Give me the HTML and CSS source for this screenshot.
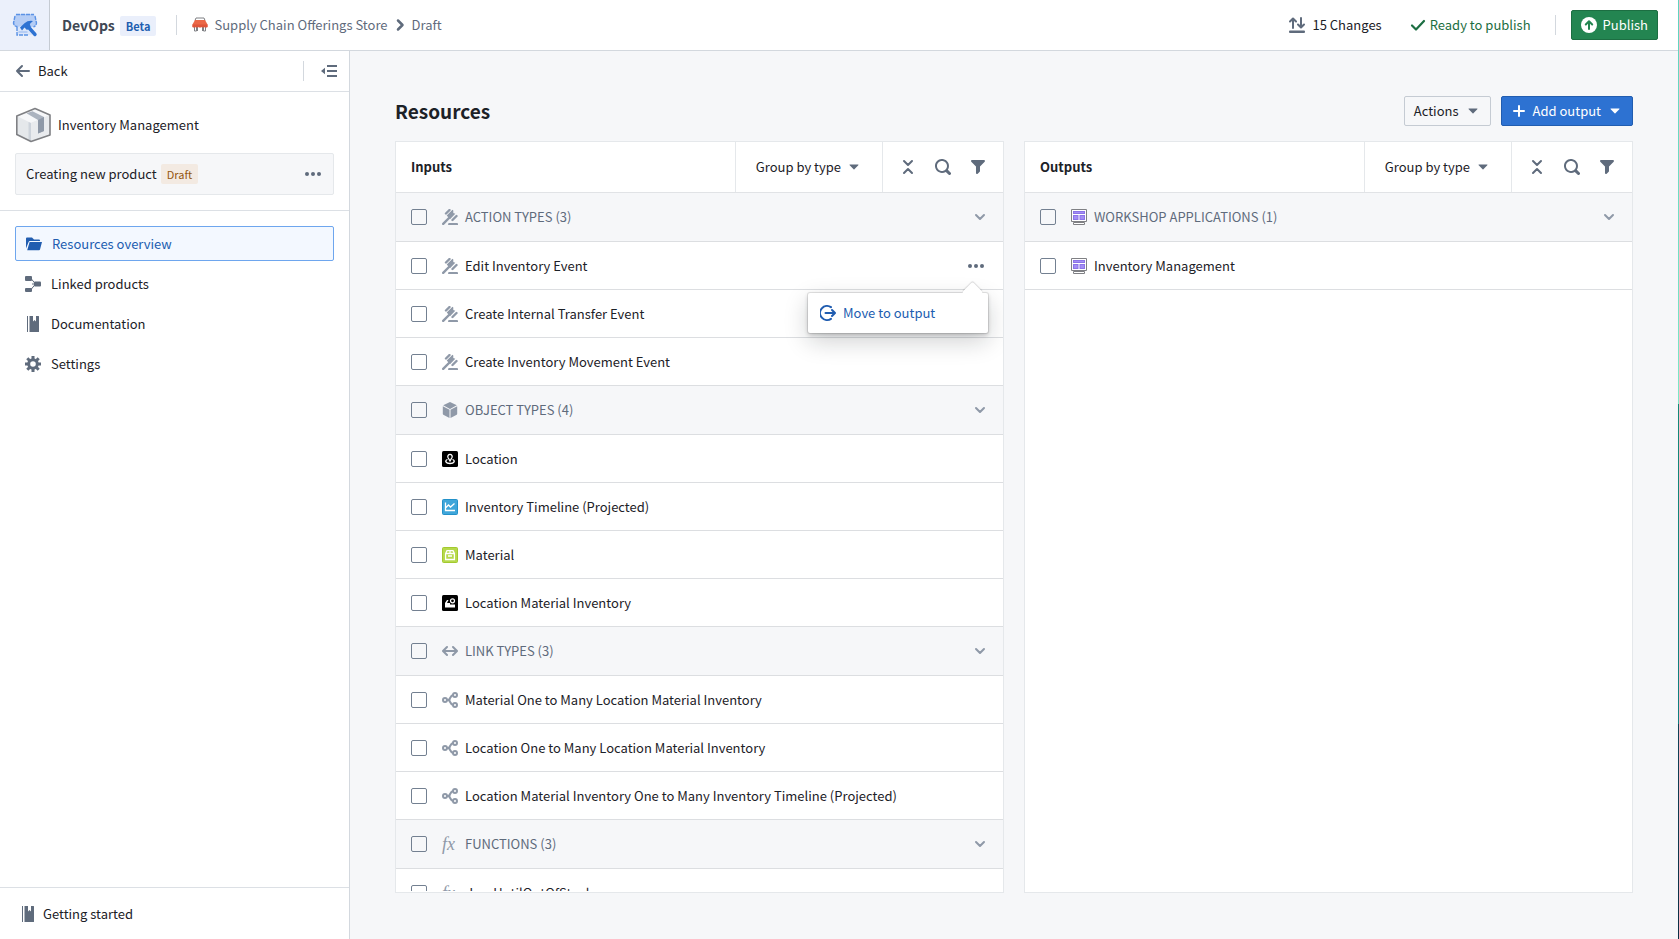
FILE: index.html
```html
<!DOCTYPE html>
<html lang="en">
<head>
  <meta charset="UTF-8">
  <meta name="viewport" content="width=device-width, initial-scale=1.0">
  <title>DevOps - Inventory Management</title>
  <link rel="stylesheet" href="styles.css">
</head>
<body>

  <!-- shared icons -->
  <svg class="sprite" aria-hidden="true">
    <symbol id="caret" viewBox="0 0 16 16"><path d="M4 5.5h8c.5 0 .6.5.3.8l-3.9 4a.5.5 0 0 1-.8 0l-3.900-4c-.3-.3-.2-.8.3-.8z"/></symbol>
    <symbol id="chevron-down" viewBox="0 0 16 16"><path d="M4 6l4 4 4-4" fill="none" stroke="currentColor" stroke-width="2" stroke-linecap="round" stroke-linejoin="round"/></symbol>
    <symbol id="collapse" viewBox="0 0 16 16"><path d="M4 2l4 4 4-4M4 14l4-4 4 4" fill="none" stroke="currentColor" stroke-width="2" stroke-linecap="round" stroke-linejoin="round"/></symbol>
    <symbol id="search" viewBox="0 0 16 16"><path d="M15.550 13.430l-2.670-2.680a6.940 6.940 0 0 0 1.110-3.760c0-3.870-3.130-7-7-7s-7 3.130-7 7 3.130 7 7 7c1.390 0 2.680-.420 3.760-1.110l2.680 2.670a1.498 1.498 0 1 0 2.120-2.120zm-8.560-1.440c-2.760 0-5-2.240-5-5s2.240-5 5-5 5 2.240 5 5-2.240 5-5 5z"/></symbol>
    <symbol id="filter" viewBox="0 0 16 16"><path d="M13.990.990h-12a1 1 0 0 0-.710 1.710l4.710 4.710v6.590a1.003 1.003 0 0 0 1.710.710l2-2c.180-.190.290-.440.290-.710V7.410l4.710-4.710a1.003 1.003 0 0 0-.710-1.710z"/></symbol>
    <symbol id="more" viewBox="0 0 16 16"><circle cx="2" cy="8" r="2"/><circle cx="8" cy="8" r="2"/><circle cx="14" cy="8" r="2"/></symbol>
    <symbol id="manual" viewBox="0 0 16 16"><path d="M2 0h1v16H2.500A.5.5 0 0 1 2 15.500zM4.500 0H8v5.500L9.500 4 11 5.500V0h1v5.500V0h1.500a.5.5 0 0 1 .5.500v15a.5.5 0 0 1-.5.500h-9z"/></symbol>
    <symbol id="action" viewBox="0 0 16 16"><path d="M1.200 14.800L7 9M4 4.500L7.500 1M10.500 11L14.500 7" fill="none" stroke="currentColor" stroke-width="2.400" stroke-linecap="round"/><path d="M4.700 6.500L10.500.7l.8.8v2.500l2 .8L8 10.200z"/><path d="M6.500 14h9l.5 1v1H6z"/></symbol>
    <symbol id="cube" viewBox="0 0 16 16"><path d="M8 0l6.800 3.300L8 7 1.200 3.300zM.8 4.200l6.700 3.600V16L1.300 12.700a1 1 0 0 1-.5-.9zM15.200 4.200L8.500 7.800V16l6.200-3.300a1 1 0 0 0 .5-.9z"/></symbol>
    <symbol id="link-types" viewBox="0 0 16 16"><path d="M1.500 8h13M5 4L1 8l4 4M11 4l4 4-4 4" fill="none" stroke="currentColor" stroke-width="2" stroke-linecap="round" stroke-linejoin="round"/></symbol>
    <symbol id="graph" viewBox="0 0 16 16"><g fill="none" stroke="currentColor" stroke-width="2"><circle cx="3" cy="8" r="2"/><circle cx="13" cy="3" r="2"/><circle cx="13" cy="13" r="2"/><path d="M5 8h1.500M11 3C8 3.500 8.500 8 6 8s5 0 0 0c2.500 0 2 4.500 5 5"/></g></symbol>
    <symbol id="workshop" viewBox="0 0 16 16"><path d="M2.500 13.500h11v2h-11z" fill="#fff" stroke="#7f8084"/><path d="M6 12h4v2H6z" fill="#7f8084"/><path d="M.5.5h15v12H.5z" fill="#fff" stroke="#7f8084"/><path d="M2 2h12v3H2zM2 6h5.500v5H2zM8.500 6H14v5H8.500z" fill="#8c74e8"/><path d="M3 3h10v1H3zM3 7h3.500v3H3zM9.500 7H13v3H9.500z" fill="#a38df5"/></symbol>
  </svg>

  <header class="topbar">
    <a class="logo" href="#" aria-label="Home">
      <svg width="26" height="26" viewBox="0 0 26 26"><path d="M5 13h15v10H5z" fill="#dbe6fa"/><path d="M4 2h18l3 9-1.500 3.500-4 .5-3.500-1-3.500 1-3-1-4 1-3-1L1 11z" fill="#b5cdf5"/><path d="M4 2.500h18M3 4L1.500 11q1 4 4 3.500M23 4l1.500 7q-.5 3-3 4" fill="none" stroke="#5b92e5" stroke-width="1.400" stroke-dasharray="4 1"/><path d="M5 15v8h12" fill="none" stroke="#5b92e5" stroke-width="1.400" stroke-dasharray="4 1"/><path d="M6.500 20h9" stroke="#8fb4ef"/><path d="M15 13.500l8 9" stroke="#2d72d2" stroke-width="3.400" stroke-linecap="round"/><path d="M8 15.500l4.500-4.300q3.500-3 8.500-2.200l-3.200 3 1 3-3.800 3-2.500-2.500-2.500 3z" fill="#2d72d2"/></svg>
    </a>
    <span class="app-name">DevOps</span>
    <span class="tag tag-beta">Beta</span>
    <span class="divider"></span>
    <nav class="crumbs" aria-label="Breadcrumb">
      <a href="#">
        <svg width="16" height="16" viewBox="0 0 16 16"><path d="M3 3.500l1-2.500h8l1 2.500" fill="#fff" stroke="#7f8084"/><path d="M2.500 10v4h2v-4M5.500 10v4M11.500 10v4h2v-4M10.500 10v4" fill="none" stroke="#7f8084"/><path d="M3 3h10l2.500 4.500v2.500H.5V7.500z" fill="#eb6847"/><path d="M.5 7.500h15V10q-1 1-2.500 0-1.500 1-3 0-2 1-4 0-1.500 1-3 0-1.500 1-2.500 0z" fill="#e0563a"/></svg>
        Supply Chain Offerings Store
      </a>
      <svg class="icon" width="16" height="16" viewBox="0 0 16 16"><path d="M6 3.500L10.500 8 6 12.500" fill="none" stroke="currentColor" stroke-width="2.500" stroke-linecap="round" stroke-linejoin="round"/></svg>
      <span>Draft</span>
    </nav>

    <div class="topbar-right">
      <button class="plain" type="button">
        <svg class="icon" width="16" height="16" viewBox="0 0 16 16"><path d="M4 11V2M1 4.500L4 1.500l3 3M12 1v9M9 7.500l3 3 3-3" fill="none" stroke="currentColor" stroke-width="2" stroke-linecap="round" stroke-linejoin="round"/><rect y="13.500" width="16" height="2.500" rx="1"/></svg>
        15 Changes
      </button>
      <span class="ready">
        <svg width="16" height="16" viewBox="0 0 16 16"><path d="M2 8.500l4 4 8-8.500" fill="none" stroke="currentColor" stroke-width="2.200" stroke-linecap="round" stroke-linejoin="round"/></svg>
        Ready to publish
      </span>
      <span class="divider"></span>
      <button class="btn btn-publish" type="button">
        <svg width="16" height="16" viewBox="0 0 16 16"><circle cx="8" cy="8" r="8" fill="#fff"/><path d="M8 12V4.500M4.800 7.500L8 4.300l3.200 3.200" fill="none" stroke="#238551" stroke-width="2" stroke-linecap="round" stroke-linejoin="round"/></svg>
        Publish
      </button>
    </div>
  </header>

  <div class="layout">
    <aside class="sidebar">
      <div class="back-row">
        <a class="back" href="#">
          <svg class="icon" width="16" height="16" viewBox="0 0 16 16"><path d="M14 8H2M7 3L2 8l5 5" fill="none" stroke="currentColor" stroke-width="2" stroke-linecap="round" stroke-linejoin="round"/></svg>
          Back
        </a>
        <span class="divider"></span>
        <button class="icon-btn" type="button" aria-label="Collapse sidebar">
          <svg class="icon" width="16" height="16" viewBox="0 0 16 16"><path d="M0 8l4-3.300v6.600zM6 2h10v2H6zM6 7h10v2H6zM6 12h10v2H6z"/></svg>
        </button>
      </div>

      <div class="product">
        <div class="product-name">
          <svg width="36" height="36" viewBox="0 0 36 36"><path d="M20 1.500L35 8v20l-19 6.500L1.800 27.500V9z" fill="#e5e8eb"/><path d="M20 1.500L35 8l-19 8L1.800 9z" fill="#f6f7f9"/><path d="M16 16l19-8v20l-19 6.500z" fill="#e9ebee"/><path d="M16 16v18.500l-2.500-1.200V15z" fill="#cdd3db"/><path d="M11.500 6.300l6-2 11.500 5.700v14l-6 2.500V13z" fill="#abb3bf"/><path d="M23 13l6-3v14l-6 2.500z" fill="#8f99a8"/><path d="M20 1.500L35 8v20l-19 6.500L1.800 27.500V9z" fill="none" stroke="#7f8084" stroke-width="1.600" stroke-linejoin="round"/></svg>
          Inventory Management
        </div>
        <div class="version">
          <span>Creating new product</span>
          <span class="tag tag-draft">Draft</span>
          <button class="icon-btn" type="button" aria-label="Product options"><svg class="icon" width="16" height="16"><use href="#more"/></svg></button>
        </div>
      </div>

      <nav class="menu">
        <a class="active" href="#">
          <svg width="16" height="16" viewBox="0 0 16 16"><path d="M0 12.500V2.500A1 1 0 0 1 1 1.500h5l2 2h5a1 1 0 0 1 1 1V5H4a1.500 1.500 0 0 0-1.400 1z"/><path d="M3.600 6H16l-2 7.500a1 1 0 0 1-1 .8H1.200z"/></svg>
          Resources overview
        </a>
        <a href="#">
          <svg class="icon" width="16" height="16" viewBox="0 0 16 16"><path d="M6 2.500L10.500 8 6 13.500M7 8h4" fill="none" stroke="currentColor"/><rect width="7" height="5" rx="1"/><rect y="12" width="7" height="4" rx="1"/><rect x="9" y="5.500" width="7" height="5" rx="1"/></svg>
          Linked products
        </a>
        <a href="#">
          <svg class="icon" width="16" height="16"><use href="#manual"/></svg>
          Documentation
        </a>
        <a href="#">
          <svg class="icon" width="16" height="16" viewBox="0 0 16 16"><circle cx="8" cy="8" r="4.300" fill="none" stroke="currentColor" stroke-width="3"/><path d="M8 0v3M8 13v3M0 8h3M13 8h3M2.300 2.300l2.200 2.200M11.500 11.500l2.200 2.200M13.700 2.300l-2.200 2.200M4.500 11.500l-2.200 2.200" stroke="currentColor" stroke-width="3"/></svg>
          Settings
        </a>
      </nav>

      <a class="getting-started" href="#">
        <svg class="icon" width="16" height="16"><use href="#manual"/></svg>
        Getting started
      </a>
    </aside>

    <main class="content">
      <div class="title-row">
        <h1>Resources</h1>
        <button class="btn btn-outline" type="button">Actions <svg class="icon" width="16" height="16"><use href="#caret"/></svg></button>
        <button class="btn btn-primary" type="button">
          <svg width="16" height="16" viewBox="0 0 16 16"><path d="M8 3v10M3 8h10" fill="none" stroke="currentColor" stroke-width="2" stroke-linecap="round"/></svg>
          Add output
          <svg width="16" height="16"><use href="#caret"/></svg>
        </button>
      </div>

      <div class="panels">
        <section class="panel">
          <div class="panel-head">
            <h2>Inputs</h2>
            <button class="group-by" type="button">Group by type <svg class="icon" width="16" height="16"><use href="#caret"/></svg></button>
            <div class="tools">
              <button class="icon-btn" type="button" aria-label="Collapse all"><svg class="icon" width="16" height="16"><use href="#collapse"/></svg></button>
              <button class="icon-btn" type="button" aria-label="Search"><svg class="icon" width="16" height="16"><use href="#search"/></svg></button>
              <button class="icon-btn" type="button" aria-label="Filter"><svg class="icon" width="16" height="16"><use href="#filter"/></svg></button>
            </div>
          </div>
          <div class="rows">
            <div class="row group">
              <input type="checkbox" id="in-actions">
              <label for="in-actions"><svg width="16" height="16"><use href="#action"/></svg>ACTION TYPES (3)</label>
              <button class="icon-btn toggle" type="button" aria-label="Toggle action types"><svg width="16" height="16"><use href="#chevron-down"/></svg></button>
            </div>
            <div class="row">
              <input type="checkbox" id="in-edit">
              <label for="in-edit"><svg width="16" height="16"><use href="#action"/></svg>Edit Inventory Event</label>
              <div class="row-menu">
                <button class="icon-btn" type="button" aria-label="More"><svg class="icon" width="16" height="16"><use href="#more"/></svg></button>
                <div class="popover">
                  <button type="button">
                    <svg width="16" height="16" viewBox="0 0 16 16"><path d="M11 2.200A7 7 0 1 0 11 13.800M5.500 8H14M12 5l3 3-3 3" fill="none" stroke="currentColor" stroke-width="2" stroke-linecap="round" stroke-linejoin="round"/></svg>
                    Move to output
                  </button>
                </div>
              </div>
            </div>
            <div class="row">
              <input type="checkbox" id="in-transfer">
              <label for="in-transfer"><svg width="16" height="16"><use href="#action"/></svg>Create Internal Transfer Event</label>
            </div>
            <div class="row">
              <input type="checkbox" id="in-movement">
              <label for="in-movement"><svg width="16" height="16"><use href="#action"/></svg>Create Inventory Movement Event</label>
            </div>
            <div class="row group">
              <input type="checkbox" id="in-objects">
              <label for="in-objects"><svg width="16" height="16"><use href="#cube"/></svg>OBJECT TYPES (4)</label>
              <button class="icon-btn toggle" type="button" aria-label="Toggle object types"><svg width="16" height="16"><use href="#chevron-down"/></svg></button>
            </div>
            <div class="row">
              <input type="checkbox" id="in-location">
              <label for="in-location"><svg width="16" height="16" viewBox="0 0 16 16"><rect width="16" height="16" rx="1.500" fill="#000"/><path d="M8 10L6 6.500a2.200 2.200 0 1 1 4 0zM5.500 8.500C2.500 9.500 3.500 12.500 8 12.500s5.500-3 2.500-4" fill="none" stroke="#fff" stroke-width="1.300"/></svg>Location</label>
            </div>
            <div class="row">
              <input type="checkbox" id="in-timeline">
              <label for="in-timeline"><svg width="16" height="16" viewBox="0 0 16 16"><rect x=".5" y=".5" width="15" height="15" rx="1" fill="#3fa6da" stroke="#2391c9"/><path d="M3.500 3.500v8h9.500M4 8.500L6.500 6l2 2L12.500 4.500" fill="none" stroke="#fff" stroke-width="1.300"/></svg>Inventory Timeline (Projected)</label>
            </div>
            <div class="row">
              <input type="checkbox" id="in-material">
              <label for="in-material"><svg width="16" height="16" viewBox="0 0 16 16"><rect x=".5" y=".5" width="15" height="15" rx="1" fill="#b6d94c" stroke="#a3c92f"/><path d="M3.600 6.500L5 3.600h6l1.400 2.900v6H3.600zM3.600 6.500h8.800M8 3.600v2.900M6 9h4" fill="none" stroke="#fff" stroke-width="1.300"/></svg>Material</label>
            </div>
            <div class="row">
              <input type="checkbox" id="in-locmat">
              <label for="in-locmat"><svg width="16" height="16" viewBox="0 0 16 16"><rect width="16" height="16" rx="1.500" fill="#000"/><path d="M3 12.500V8l2-3h1.500L5 8h3v1.500h5v3z" fill="#fff"/><circle cx="10.500" cy="5.800" r="2" fill="none" stroke="#fff" stroke-width="1.200"/></svg>Location Material Inventory</label>
            </div>
            <div class="row group">
              <input type="checkbox" id="in-links">
              <label for="in-links"><svg width="16" height="16"><use href="#link-types"/></svg>LINK TYPES (3)</label>
              <button class="icon-btn toggle" type="button" aria-label="Toggle link types"><svg width="16" height="16"><use href="#chevron-down"/></svg></button>
            </div>
            <div class="row">
              <input type="checkbox" id="in-link1">
              <label for="in-link1"><svg width="16" height="16"><use href="#graph"/></svg>Material One to Many Location Material Inventory</label>
            </div>
            <div class="row">
              <input type="checkbox" id="in-link2">
              <label for="in-link2"><svg width="16" height="16"><use href="#graph"/></svg>Location One to Many Location Material Inventory</label>
            </div>
            <div class="row">
              <input type="checkbox" id="in-link3">
              <label for="in-link3"><svg width="16" height="16"><use href="#graph"/></svg>Location Material Inventory One to Many Inventory Timeline (Projected)</label>
            </div>
            <div class="row group">
              <input type="checkbox" id="in-functions">
              <label for="in-functions"><i class="fx">fx</i>FUNCTIONS (3)</label>
              <button class="icon-btn toggle" type="button" aria-label="Toggle functions"><svg width="16" height="16"><use href="#chevron-down"/></svg></button>
            </div>
            <div class="row">
              <input type="checkbox" id="in-days">
              <label for="in-days"><i class="fx">fx</i>daysUntilOutOfStock</label>
            </div>
          </div>
        </section>

        <section class="panel">
          <div class="panel-head">
            <h2>Outputs</h2>
            <button class="group-by" type="button">Group by type <svg class="icon" width="16" height="16"><use href="#caret"/></svg></button>
            <div class="tools">
              <button class="icon-btn" type="button" aria-label="Collapse all"><svg class="icon" width="16" height="16"><use href="#collapse"/></svg></button>
              <button class="icon-btn" type="button" aria-label="Search"><svg class="icon" width="16" height="16"><use href="#search"/></svg></button>
              <button class="icon-btn" type="button" aria-label="Filter"><svg class="icon" width="16" height="16"><use href="#filter"/></svg></button>
            </div>
          </div>
          <div class="rows">
            <div class="row group">
              <input type="checkbox" id="out-workshop">
              <label for="out-workshop"><svg width="16" height="16"><use href="#workshop"/></svg>WORKSHOP APPLICATIONS (1)</label>
              <button class="icon-btn toggle" type="button" aria-label="Toggle workshop applications"><svg width="16" height="16"><use href="#chevron-down"/></svg></button>
            </div>
            <div class="row">
              <input type="checkbox" id="out-inventory">
              <label for="out-inventory"><svg width="16" height="16"><use href="#workshop"/></svg>Inventory Management</label>
            </div>
          </div>
        </section>
      </div>
    </main>
  </div>

</body>
</html>
```
FILE: styles.css
```css
* {
  box-sizing: border-box;
}

body {
  margin: 0;
  height: 100vh;
  display: flex;
  flex-direction: column;
  overflow: hidden;
  background: #f6f7f9;
  border-right: 1px solid;
  border-image: linear-gradient(#5fd3bf, #7be8c6 43%, #128a78 43%, #0f7f80 77%, #0d4358 77%, #0a2f45) 1;
  color: #1c2127;
  font-family: "Noto Sans CJK JP", "Noto Sans", sans-serif;
  font-size: 13px;
  line-height: 20px;
}

a {
  color: inherit;
  text-decoration: none;
}

button {
  font: inherit;
  color: inherit;
  background: none;
  border: none;
  padding: 0;
  cursor: pointer;
}

svg {
  display: block;
  flex: none;
  fill: currentColor;
}

.sprite {
  position: absolute;
  width: 0;
  height: 0;
}

.icon {
  color: #5f6b7c;
}

.icon-btn {
  display: flex;
}

.divider {
  width: 1px;
  height: 20px;
  background: #d3d8de;
}

/* Top bar */
.topbar {
  display: flex;
  align-items: center;
  flex: none;
  height: 51px;
  padding-right: 20px;
  background: #fff;
  border-bottom: 1px solid #d3d8de;
}

.logo {
  display: flex;
  align-items: center;
  justify-content: center;
  width: 50px;
  height: 50px;
  margin-right: 12px;
  background: #ebf0fb;
  border-right: 1px solid #c5cbd3;
}

.app-name {
  font-size: 14px;
  font-weight: 700;
  color: #404854;
}

.tag {
  padding: 0 6px;
  border-radius: 2px;
  font-size: 11px;
}

.tag-beta {
  margin: 2px 20px 0 5px;
  background: #eaeffb;
  color: #215db0;
  font-weight: 700;
}

.tag-draft {
  margin-left: 4px;
  background: #f3eae2;
  color: #935610;
}

.crumbs {
  display: flex;
  align-items: center;
  gap: 4px;
  margin-left: 15px;
  color: #5f6b7c;
}

.crumbs a {
  display: flex;
  align-items: center;
  gap: 6px;
}

.topbar-right {
  display: flex;
  align-items: center;
  margin-left: auto;
}

.plain,
.ready {
  display: flex;
  align-items: center;
  gap: 7px;
}

.ready {
  gap: 4px;
  margin: 0 24px 0 28px;
  color: #1c6e42;
}

.btn {
  display: flex;
  align-items: center;
  height: 30px;
  padding: 0 9px;
  border-radius: 2px;
}

.btn-publish {
  gap: 6px;
  margin-left: 15px;
  background: #238551;
  border: 1px solid #1c6e42;
  color: #fff;
}

.btn-outline {
  gap: 6px;
  border: 1px solid #c5cbd3;
}

.btn-primary {
  gap: 6px;
  background: #2d72d2;
  border: 1px solid #215db0;
  color: #fff;
}

/* Sidebar */
.layout {
  display: flex;
  flex: 1;
  min-height: 0;
}

.sidebar {
  display: flex;
  flex-direction: column;
  width: 350px;
  background: #fff;
  border-right: 1px solid #d3d8de;
}

.back-row {
  display: flex;
  align-items: center;
  height: 41px;
  padding: 0 12px 0 15px;
  border-bottom: 1px solid #dce0e5;
}

.back {
  display: flex;
  align-items: center;
  gap: 7px;
  flex: 1;
}

.back-row .icon-btn {
  margin-left: 17px;
}

.product {
  padding: 15px;
  border-bottom: 1px solid #dce0e5;
}

.product-name {
  display: flex;
  align-items: center;
  gap: 7px;
  margin-bottom: 10px;
}

.version {
  display: flex;
  align-items: center;
  height: 42px;
  padding: 0 12px 0 10px;
  background: #f6f7f9;
  border: 1px solid #e5e8eb;
  border-radius: 2px;
}

.version .icon-btn {
  margin-left: auto;
}

.menu {
  display: flex;
  flex-direction: column;
  gap: 5px;
  padding: 15px;
}

.menu a {
  display: flex;
  align-items: center;
  gap: 10px;
  height: 35px;
  padding: 0 10px;
  border-radius: 2px;
}

.menu .active {
  background: #f3f8ff;
  border: 1px solid #6ea6ee;
  color: #215db0;
}

.getting-started {
  display: flex;
  align-items: center;
  gap: 7px;
  height: 52px;
  margin-top: auto;
  padding: 0 20px;
  border-top: 1px solid #dce0e5;
}

/* Main content */
.content {
  display: flex;
  flex: 1;
  flex-direction: column;
  min-width: 0;
  padding: 45px 45px 46px 45px;
}

.title-row {
  display: flex;
  align-items: center;
  gap: 10px;
  margin-bottom: 15px;
}

h1 {
  flex: 1;
  margin: 0;
  font-size: 19px;
  line-height: 30px;
}

.panels {
  display: grid;
  grid-template-columns: 1fr 1fr;
  gap: 20px;
  flex: 1;
  min-height: 0;
}

.panel {
  display: flex;
  flex-direction: column;
  min-width: 0;
  min-height: 0;
  padding-bottom: 1px;
  background: #fff;
  border: 1px solid #e5e8eb;
}

.panel-head {
  display: flex;
  flex: none;
  height: 51px;
  border-bottom: 1px solid #e1e3e6;
}

h2 {
  flex: 1;
  margin: 0;
  padding-left: 15px;
  font-size: 13px;
  line-height: 50px;
}

.group-by,
.tools {
  display: flex;
  align-items: center;
  border-left: 1px solid #e5e8eb;
}

.group-by {
  gap: 5px;
  padding: 0 20px;
}

.tools {
  gap: 19px;
  padding: 0 17px;
}

.rows {
  flex: 1;
  overflow: hidden;
}

.row {
  display: flex;
  align-items: center;
  height: 48px;
  padding: 0 15px;
  border-bottom: 1px solid #dcdee1;
}

.row.group {
  height: 49px;
  background: #f6f7f9;
  color: #5f6b7c;
}

.row label {
  display: flex;
  align-items: center;
  gap: 7px;
  flex: 1;
}

.row label svg,
.fx,
.toggle {
  color: #8f99a8;
}

.fx {
  width: 16px;
  font-family: "Liberation Serif", serif;
  font-size: 18px;
}

input[type="checkbox"] {
  appearance: none;
  width: 16px;
  height: 16px;
  margin: 0 15px 0 0;
  background: #fff;
  border: 1px solid #738091;
  border-radius: 2px;
}

.group input[type="checkbox"] {
  background: transparent;
}

/* Row menu */
.row-menu {
  position: relative;
  margin-right: 4px;
}

.popover {
  position: absolute;
  top: 35px;
  right: -4px;
  z-index: 1;
  width: 180px;
  padding: 5px;
  background: #fff;
  border-radius: 2px;
  box-shadow: 0 0 0 1px rgba(17, 20, 24, 0.1), 0 2px 4px rgba(17, 20, 24, 0.2), 0 8px 24px rgba(17, 20, 24, 0.2);
}

.popover::before {
  content: "";
  position: absolute;
  top: -8px;
  right: 8px;
  width: 15px;
  height: 15px;
  background: #fff;
  border-radius: 2px;
  box-shadow: -1px -1px 1px rgba(17, 20, 24, 0.15);
  transform: rotate(45deg);
}

.popover button {
  position: relative;
  display: flex;
  align-items: center;
  gap: 7px;
  width: 100%;
  height: 30px;
  padding: 0 7px;
  color: #215db0;
}
```
